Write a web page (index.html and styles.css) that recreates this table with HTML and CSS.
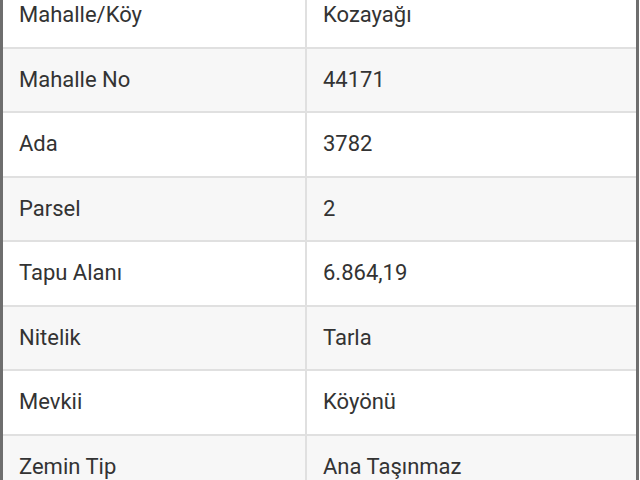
FILE: index.html
```html
<!DOCTYPE html>
<html lang="tr">
<head>
<meta charset="utf-8">
<link rel="stylesheet" href="styles.css">
</head>
<body>
<div class="frame">
  <table class="info">
    <tbody>
      <tr><td class="k">Mahalle/Köy</td><td class="v">Kozayağı</td></tr>
      <tr><td class="k">Mahalle No</td><td class="v">44171</td></tr>
      <tr><td class="k">Ada</td><td class="v">3782</td></tr>
      <tr><td class="k">Parsel</td><td class="v">2</td></tr>
      <tr><td class="k">Tapu Alanı</td><td class="v">6.864,19</td></tr>
      <tr><td class="k">Nitelik</td><td class="v">Tarla</td></tr>
      <tr><td class="k">Mevkii</td><td class="v">Köyönü</td></tr>
      <tr><td class="k">Zemin Tip</td><td class="v">Ana Taşınmaz</td></tr>
    </tbody>
  </table>
</div>
</body>
</html>
```

FILE: styles.css
```css
html, body {
  margin: 0;
  padding: 0;
  background: #fff;
  overflow: hidden;
  height: 480px;
}
.frame {
  width: 633px;
  height: 480px;
  border-left: 3px solid #6e6e6e;
  border-right: 3px solid #6e6e6e;
  overflow: hidden;
  font-family: Roboto, "Noto Sans", sans-serif;
  color: #333;
  font-size: 22px;
}
.info {
  width: 100%;
  border-collapse: collapse;
  margin-top: -17px;
}
.info tr {
  height: 64.5px;
  background: #fff;
}
.info tr:nth-child(even) {
  background: #f7f7f7;
}
.info td {
  border-bottom: 2px solid #e0e0e0;
  padding: 0 16px;
  vertical-align: middle;
  line-height: 26px;
}
.info td.k {
  width: 270px;
  border-right: 2px solid #e0e0e0;
}
```
